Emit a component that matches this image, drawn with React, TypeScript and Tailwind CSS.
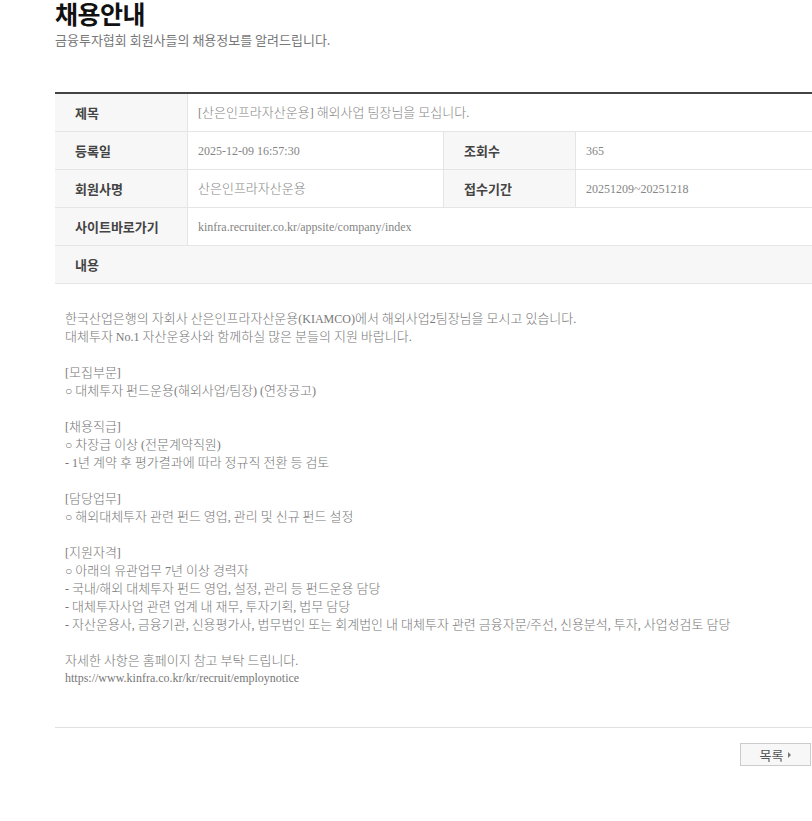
import React from "react";

const serif = { fontFamily: '"Liberation Serif", "Noto Sans CJK KR", serif' };
const sans = { fontFamily: '"Noto Sans CJK KR", "Noto Sans", sans-serif' };

function K({ text }: { text: string }) {
  const parts = text.split(/([\uAC00-\uD7A3\u3131-\u318E]+)/);
  return (
    <>
      {parts.map((p, i) =>
        /[\uAC00-\uD7A3\u3131-\u318E]/.test(p) ? (
          <span key={i} className="text-[13px] font-light" style={sans}>
            {p}
          </span>
        ) : (
          <span key={i}>{p}</span>
        )
      )}
    </>
  );
}

const bodyLines = [
  "한국산업은행의 자회사 산은인프라자산운용(KIAMCO)에서 해외사업2팀장님을 모시고 있습니다.",
  "대체투자 No.1 자산운용사와 함께하실 많은 분들의 지원 바랍니다.",
  "",
  "[모집부문]",
  "○ 대체투자 펀드운용(해외사업/팀장) (연장공고)",
  "",
  "[채용직급]",
  "○ 차장급 이상 (전문계약직원)",
  "- 1년 계약 후 평가결과에 따라 정규직 전환 등 검토",
  "",
  "[담당업무]",
  "○ 해외대체투자 관련 펀드 영업, 관리 및 신규 펀드 설정",
  "",
  "[지원자격]",
  "○ 아래의 유관업무 7년 이상 경력자",
  "- 국내/해외 대체투자 펀드 영업, 설정, 관리 등 펀드운용 담당",
  "- 대체투자사업 관련 업계 내 재무, 투자기획, 법무 담당",
  "- 자산운용사, 금융기관, 신용평가사, 법무법인 또는 회계법인 내 대체투자 관련 금융자문/주선, 신용분석, 투자, 사업성검토 담당",
  "",
  "자세한 사항은 홈페이지 참고 부탁 드립니다.",
  "https://www.kinfra.co.kr/kr/recruit/employnotice",
];

function Label({ children, w }: { children: React.ReactNode; w: string }) {
  return (
    <div
      className={`${w} h-full shrink-0 bg-[#f7f7f7] border-r border-[#e5e5e5] pl-[20px] flex items-center text-[13px] font-bold text-[#444]`}
      style={sans}
    >
      {children}
    </div>
  );
}

function Value({ text, w }: { text: string; w?: string }) {
  return (
    <div
      className={`${w ?? "flex-1"} h-full ${w ? "border-r border-[#e5e5e5] shrink-0" : ""} pl-[10px] flex items-center text-[12px] text-[#858585] whitespace-nowrap overflow-hidden`}
      style={serif}
    >
      <span className="leading-[18px]">
        <K text={text} />
      </span>
    </div>
  );
}

export default function App() {
  return (
    <div className="w-[812px] min-h-[821px] bg-white overflow-hidden">
      <div className="pl-[55px]">
        <h1
          className="pt-[1px] text-[25px] leading-[25px] font-bold text-[#111] tracking-[-0.5px]"
          style={sans}
        >
          채용안내
        </h1>
        <p
          className="mt-[5px] text-[13px] leading-[18px] text-[#777]"
          style={sans}
        >
          금융투자협회 회원사들의 채용정보를 알려드립니다.
        </p>

        <div className="mt-[43px] w-[757px] border-t-2 border-[#444]">
          <div className="flex h-[38px] border-b border-[#e5e5e5]">
            <Label w="w-[133px]">제목</Label>
            <Value text="[산은인프라자산운용] 해외사업 팀장님을 모십니다." />
          </div>
          <div className="flex h-[38px] border-b border-[#e5e5e5]">
            <Label w="w-[133px]">등록일</Label>
            <Value w="w-[256px]" text="2025-12-09 16:57:30" />
            <Label w="w-[132px]">조회수</Label>
            <Value text="365" />
          </div>
          <div className="flex h-[38px] border-b border-[#e5e5e5]">
            <Label w="w-[133px]">회원사명</Label>
            <Value w="w-[256px]" text="산은인프라자산운용" />
            <Label w="w-[132px]">접수기간</Label>
            <Value text="20251209~20251218" />
          </div>
          <div className="flex h-[38px] border-b border-[#e5e5e5]">
            <Label w="w-[133px]">사이트바로가기</Label>
            <Value text="kinfra.recruiter.co.kr/appsite/company/index" />
          </div>
          <div
            className="flex h-[38px] items-center border-b border-[#e5e5e5] bg-[#f7f7f7] pl-[20px] text-[13px] font-bold text-[#444]"
            style={sans}
          >
            내용
          </div>

          <div
            className="pt-[25px] pb-[40px] pl-[10px] border-b border-[#e0e0e0] text-[12px] leading-[18px] text-[#777]"
            style={serif}
          >
            {bodyLines.map((l, i) => (
              <div key={i} className="h-[18px] leading-[18px] whitespace-nowrap">
                <K text={l} />
              </div>
            ))}
          </div>

          <div className="flex justify-end mt-[15px] pr-[1px]">
            <button
              className="w-[71px] h-[23px] border border-[#ccc] bg-[#f7f7f7] flex items-center justify-center gap-[5px] text-[13px] text-[#555]"
              style={sans}
            >
              <span>목록</span>
              <svg width="3" height="6" viewBox="0 0 3 6">
                <path d="M0 0 L3 3 L0 6 Z" fill="#777" />
              </svg>
            </button>
          </div>
        </div>
      </div>
    </div>
  );
}
